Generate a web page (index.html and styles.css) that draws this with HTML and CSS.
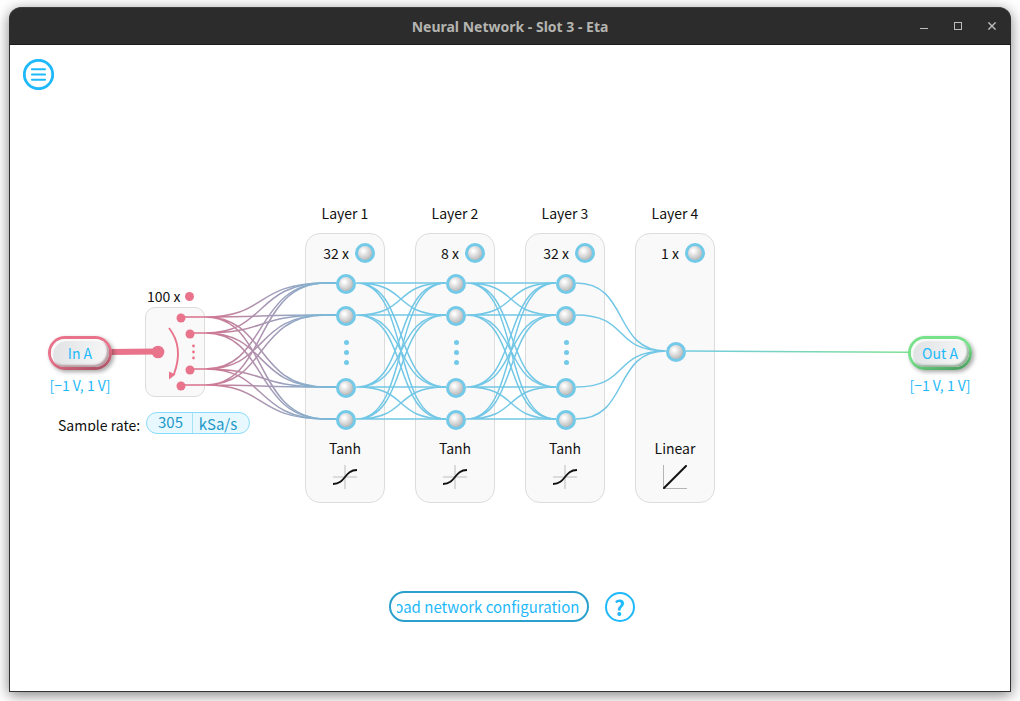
FILE: index.html
```html
<!DOCTYPE html>
<html lang="en">
<head>
<meta charset="utf-8">
<title>Neural Network - Slot 3 - Eta</title>
<link rel="stylesheet" href="styles.css">
</head>
<body>
<div class="window">
  <header class="titlebar">
    <h1 class="titlebar-text">Neural Network - Slot 3 - Eta</h1>
    <div class="window-controls">
      <button class="window-button" aria-label="Minimize"><svg width="8" height="8"><path d="M0 6.5H8" stroke="#bdbdbd"/></svg></button>
      <button class="window-button" aria-label="Maximize"><svg width="8" height="8"><rect x=".5" y=".5" width="7" height="7" fill="none" stroke="#bdbdbd"/></svg></button>
      <button class="window-button" aria-label="Close"><svg width="8" height="8"><path d="M.4 .4L7.6 7.6M7.6 .4L.4 7.6" stroke="#bdbdbd" stroke-width="1.4"/></svg></button>
    </div>
  </header>
  <main class="content">
    <button class="menu-button" aria-label="Menu">
      <svg width="31" height="31" fill="none" stroke="#1eb9fb"><circle cx="15.5" cy="15.5" r="14.2" stroke-width="2.8"/><path d="M9 10.2H22M9 15.5H22M9 20.8H22" stroke-width="2.1" stroke-linecap="round"/></svg>
    </button>

    <section class="stage">
      <div class="network">
        <div class="source">
          <div class="port-group port-group-in">
            <button class="port port-in">In A</button>
            <button class="range">[−1 V, 1 V]</button>
          </div>
          <div class="tap-count">100 x <i class="tap-dot"></i></div>
          <div class="mux"></div>
          <div class="rate">
            <label class="rate-label" for="rate">Sample rate:</label>
            <div class="rate-field">
              <input class="rate-value" id="rate" type="text" value="305">
              <button class="rate-unit">kSa/s</button>
            </div>
          </div>
        </div>

        <div class="layers">
          <div class="layer">
            <h2 class="layer-name">Layer 1</h2>
            <div class="panel">
              <div class="panel-count">32 x <i class="neuron"></i></div>
              <div class="neurons"><i class="neuron"></i><i class="neuron"></i><span class="dots"><i></i><i></i><i></i></span><i class="neuron"></i><i class="neuron"></i></div>
              <div class="activation">Tanh</div>
              <svg class="graph" width="24" height="24" fill="none"><path d="M12 0V24M0 12H24" stroke="#d2d2d2" stroke-width="1.6"/><path d="M0 19C13 19 11 5 24 5" stroke="#111" stroke-width="1.8"/></svg>
            </div>
          </div>
          <div class="layer">
            <h2 class="layer-name">Layer 2</h2>
            <div class="panel">
              <div class="panel-count">8 x <i class="neuron"></i></div>
              <div class="neurons"><i class="neuron"></i><i class="neuron"></i><span class="dots"><i></i><i></i><i></i></span><i class="neuron"></i><i class="neuron"></i></div>
              <div class="activation">Tanh</div>
              <svg class="graph" width="24" height="24" fill="none"><path d="M12 0V24M0 12H24" stroke="#d2d2d2" stroke-width="1.6"/><path d="M0 19C13 19 11 5 24 5" stroke="#111" stroke-width="1.8"/></svg>
            </div>
          </div>
          <div class="layer">
            <h2 class="layer-name">Layer 3</h2>
            <div class="panel">
              <div class="panel-count">32 x <i class="neuron"></i></div>
              <div class="neurons"><i class="neuron"></i><i class="neuron"></i><span class="dots"><i></i><i></i><i></i></span><i class="neuron"></i><i class="neuron"></i></div>
              <div class="activation">Tanh</div>
              <svg class="graph" width="24" height="24" fill="none"><path d="M12 0V24M0 12H24" stroke="#d2d2d2" stroke-width="1.6"/><path d="M0 19C13 19 11 5 24 5" stroke="#111" stroke-width="1.8"/></svg>
            </div>
          </div>
          <div class="layer">
            <h2 class="layer-name">Layer 4</h2>
            <div class="panel">
              <div class="panel-count">1 x <i class="neuron"></i></div>
              <div class="neurons neurons-single"><i class="neuron"></i></div>
              <div class="activation">Linear</div>
              <svg class="graph" width="24" height="24" fill="none"><path d="M.5 0V23.5H24" stroke="#b4b4b4"/><path d="M1 23L23 1" stroke="#111" stroke-width="2" stroke-linecap="round"/></svg>
            </div>
          </div>
        </div>

        <svg class="wires" viewBox="48 203 667 300" width="667" height="300" fill="none">
          <defs>
            <linearGradient id="fan" gradientUnits="userSpaceOnUse" x1="195" y1="0" x2="340" y2="0"><stop offset="0" stop-color="#db6f8a"/><stop offset="1" stop-color="#72c0de"/></linearGradient>
            <g id="mesh">
              <path d="M356 283H446M356 283C410 283 392 315 446 315M356 283C410 283 392 387 446 387M356 283C410 283 392 419 446 419"/>
              <path d="M356 315H446M356 315C410 315 392 283 446 283M356 315C410 315 392 387 446 387M356 315C410 315 392 419 446 419"/>
              <path d="M356 387H446M356 387C410 387 392 283 446 283M356 387C410 387 392 315 446 315M356 387C410 387 392 419 446 419"/>
              <path d="M356 419H446M356 419C410 419 392 283 446 283M356 419C410 419 392 315 446 315M356 419C410 419 392 387 446 387"/>
            </g>
          </defs>
          <g stroke="url(#fan)" stroke-width="1.5">
            <path d="M181 317H205C268 317 254 283 326 283H340M205 317C268 317 254 315 326 315H340M205 317C268 317 254 387 326 387H340M205 317C268 317 254 419 326 419H340"/>
            <path d="M190 333H205C268 333 254 283 326 283H340M205 333C268 333 254 315 326 315H340M205 333C268 333 254 387 326 387H340M205 333C268 333 254 419 326 419H340"/>
            <path d="M190 369H205C268 369 254 283 326 283H340M205 369C268 369 254 315 326 315H340M205 369C268 369 254 387 326 387H340M205 369C268 369 254 419 326 419H340"/>
            <path d="M181 385H205C268 385 254 283 326 283H340M205 385C268 385 254 315 326 315H340M205 385C268 385 254 387 326 387H340M205 385C268 385 254 419 326 419H340"/>
          </g>
          <g stroke="#72c7e6" stroke-width="1.5">
            <use href="#mesh"/>
            <use href="#mesh" x="110"/>
            <path d="M576 283C630 283 612 351 666 351M576 315C630 315 612 351 666 351M576 387C630 387 612 351 666 351M576 419C630 419 612 351 666 351"/>
          </g>
          <path d="M108 352L158 351.500" stroke="#e8738a" stroke-width="6"/>
          <path d="M169 328Q184 347 174 374" stroke="#e8738a" stroke-width="1.9"/>
          <g fill="#e8738a">
            <path d="M169 371.500L175.500 374.500L169 379.500Z"/>
            <circle cx="158" cy="352" r="6.300"/>
            <circle cx="181" cy="318" r="4.500"/><circle cx="190" cy="334" r="4.500"/><circle cx="190" cy="370" r="4.500"/><circle cx="181" cy="386" r="4.500"/>
            <circle cx="193.500" cy="346" r="1.400"/><circle cx="193.500" cy="352" r="1.400"/><circle cx="193.500" cy="358" r="1.400"/>
          </g>
        </svg>
      </div>

      <svg class="output-wire" viewBox="0 0 222 4" preserveAspectRatio="none">
        <defs><linearGradient id="out" gradientUnits="userSpaceOnUse" x1="0" y1="0" x2="222" y2="0"><stop offset="0" stop-color="#72cbe0"/><stop offset="1" stop-color="#80e096"/></linearGradient></defs>
        <path d="M0 1L222 2.200" stroke="url(#out)" stroke-width="1.500" fill="none"/>
      </svg>

      <div class="port-group port-group-out">
        <button class="port port-out">Out A</button>
        <button class="range">[−1 V, 1 V]</button>
      </div>
    </section>

    <footer class="actions">
      <button class="load-button"><span class="load-text">Load network configuration</span></button>
      <button class="help-button" aria-label="Help">?</button>
    </footer>
  </main>
</div>
</body>
</html>
```
FILE: styles.css
```css
* { box-sizing: border-box; }

body {
  margin: 0;
  min-height: 100vh;
  padding: 7px 9px 9px;
  display: flex;
  background: #fff;
  color: #111;
  font: 14px/20px "Noto Sans CJK SC", sans-serif;
  overflow: hidden;
}

button, input {
  margin: 0;
  padding: 0;
  border: 0;
  background: none;
  color: inherit;
  font: inherit;
}

button { cursor: pointer; }
svg { display: block; }

.window {
  flex: 1;
  display: flex;
  flex-direction: column;
  border-radius: 12px 12px 0 0;
  box-shadow: 0 3px 14px rgba(0, 0, 0, .5);
}

.titlebar {
  display: flex;
  align-items: center;
  height: 38px;
  padding: 0 9px;
  background: #2c2c2c;
  border-top: 1px solid #3c3c3c;
  border-bottom: 1px solid #1c1c1c;
  border-radius: 12px 12px 0 0;
}

.titlebar-text {
  flex: 1;
  margin: 0 0 0 88px;
  padding-top: 2px;
  text-align: center;
  color: #b4b4b0;
  font: bold 14px/20px "Noto Sans", sans-serif;
}

.window-controls { display: flex; gap: 14px; }

.window-button {
  display: grid;
  place-items: center;
  width: 20px;
  height: 20px;
}

.content {
  flex: 1;
  display: flex;
  flex-direction: column;
  padding: 14px 13px 0;
  background: #fff;
  border: 1px solid #333;
  border-top: 0;
}

.menu-button { align-self: flex-start; }

.stage {
  display: flex;
  margin-top: 113px;
  padding: 0 25px;
}

.network {
  position: relative;
  display: flex;
  flex: none;
}

.wires {
  position: absolute;
  top: 0;
  left: 0;
  pointer-events: none;
}

.source {
  display: grid;
  grid-template-columns: 97px 60px 100px;
  grid-template-rows: 104px 90px auto;
}

.port-group {
  display: flex;
  flex-direction: column;
  align-items: center;
  gap: 5px;
  width: 64px;
}

.port-group-in { grid-area: 2 / 1; padding-top: 29px; }
.port-group-out { padding-top: 133px; }

.port {
  position: relative;
  z-index: 1;
  width: 64px;
  height: 34px;
  border: 3px solid transparent;
  border-radius: 17px;
  color: #1eb9fb;
}

.port-in {
  background: linear-gradient(100deg, #dfe1e3, #f8f8f8) padding-box, linear-gradient(165deg, #e8738a 50%, #a04c5e) border-box;
  box-shadow: 2px 2px 4px rgba(0, 0, 0, .35), inset 2px 2px 1px #fafafa, inset -2px -2px 2px #b49aa0;
}

.port-out {
  background: linear-gradient(100deg, #dfe1e3, #f8f8f8) padding-box, linear-gradient(165deg, #76e28a 50%, #439457) border-box;
  box-shadow: 2px 2px 4px rgba(0, 0, 0, .35), inset 2px 2px 1px #fafafa, inset -2px -2px 2px #98b09c;
}

.range { color: #1eb9fb; white-space: nowrap; }

.tap-count {
  grid-area: 1 / 2;
  align-self: end;
  display: flex;
  align-items: center;
  gap: 5px;
  padding: 0 0 1px 2px;
  white-space: nowrap;
}

.tap-dot {
  width: 9px;
  height: 9px;
  border-radius: 50%;
  background: #e8738a;
}

.mux {
  grid-area: 2 / 2;
  background: #f9f9f9;
  border: 1px solid #dcdcdc;
  border-radius: 10px;
}

.rate {
  grid-area: 3 / 1 / 4 / 4;
  display: flex;
  align-items: flex-start;
  gap: 5px;
  margin: 15px 0 0 10px;
}

.rate-label {
  width: 83px;
  height: 16px;
  margin-top: 3px;
  overflow: hidden;
  white-space: nowrap;
}

.rate-field {
  display: flex;
  width: 104px;
  height: 22px;
  background: #e8f8ff;
  border: 1px solid #8adcf8;
  border-radius: 11px;
  color: #2098c8;
  font-size: 15px;
  line-height: 20px;
}

.rate-value {
  width: 45px;
  height: 18px;
  padding-left: 2px;
  text-align: center;
}

.rate-unit {
  width: 51px;
  padding-top: 2px;
  border-left: 1px solid #a8e2f8;
  line-height: 18px;
}

.layers { display: flex; gap: 30px; }

.layer {
  display: flex;
  flex-direction: column;
  gap: 10px;
  width: 80px;
}

.layer-name {
  margin: 0;
  font: inherit;
  text-align: center;
}

.panel {
  display: flex;
  flex-direction: column;
  align-items: center;
  height: 270px;
  padding-top: 9px;
  background: #f9f9f9;
  border: 1px solid #dcdcdc;
  border-radius: 15px;
}

.panel-count {
  align-self: flex-end;
  display: flex;
  gap: 6px;
  padding-right: 9px;
}

.neuron {
  position: relative;
  z-index: 1;
  width: 20px;
  height: 20px;
  border: 3px solid #72c9e8;
  border-radius: 50%;
  background: radial-gradient(circle at 38% 35%, #fff 5%, #d8d8d8 45%, #a4a4a4 95%);
}

.neurons {
  display: flex;
  flex-direction: column;
  align-items: center;
  gap: 12px;
  height: 156px;
  margin-top: 11px;
  padding-left: 2px;
}

.neurons-single { justify-content: center; }

.dots {
  display: flex;
  flex-direction: column;
  align-items: center;
  justify-content: center;
  gap: 5px;
  height: 28px;
}

.dots i {
  width: 5px;
  height: 5px;
  border-radius: 50%;
  background: #72c9e8;
}

.activation { margin-top: 8px; }
.graph { margin-top: 7px; }

.output-wire {
  position: relative;
  flex: 1;
  min-width: 0;
  height: 4px;
  margin: 147px 0 0 -29px;
}

.actions {
  display: flex;
  justify-content: center;
  gap: 16px;
  margin-top: 88px;
  padding-left: 3px;
}

.load-button {
  width: 200px;
  height: 31px;
  padding: 0 7px 0 6px;
  border: 2px solid #2ba0cc;
  border-radius: 16px;
  color: #1eb9fb;
}

.load-text {
  display: flex;
  justify-content: flex-end;
  overflow: hidden;
  white-space: nowrap;
  font-size: 15px;
  line-height: 24px;
}

.help-button {
  width: 30px;
  height: 30px;
  margin-top: 1px;
  border: 2px solid #1eb9fb;
  border-radius: 50%;
  color: #1eb9fb;
  font-size: 21px;
  font-weight: bold;
  line-height: 24px;
}
```
